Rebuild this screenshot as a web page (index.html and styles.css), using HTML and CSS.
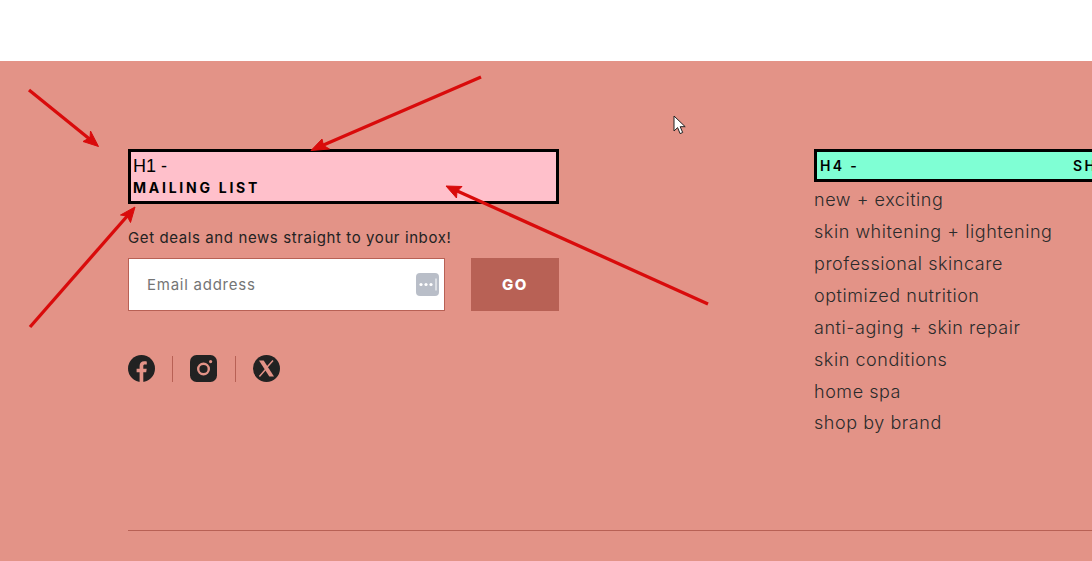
FILE: index.html
```html
<!DOCTYPE html>
<html lang="en">
<head>
<meta charset="utf-8">
<title>Footer</title>
<link rel="stylesheet" href="styles.css">
</head>
<body>
<header class="top"></header>
<footer class="footer">
  <div class="columns">
    <section class="signup">
      <h1 class="mail-title"><span class="tag">H1 -</span><span class="mail-text">MAILING LIST</span></h1>
      <p class="lead">Get deals and news straight to your inbox!</p>
      <form class="form">
        <div class="field">
          <span class="placeholder">Email address</span>
          <svg class="keyicon" width="23" height="23" viewBox="0 0 23 23"><rect width="23" height="23" rx="4" fill="#b9bec8"/><circle cx="5" cy="11.5" r="1.6" fill="#fff"/><circle cx="10" cy="11.5" r="1.6" fill="#fff"/><circle cx="15" cy="11.5" r="1.6" fill="#fff"/><rect x="19.5" y="5.5" width="1" height="12" fill="#fff"/></svg>
        </div>
        <div class="go">GO</div>
      </form>
      <div class="social">
        <svg class="icon" width="27" height="27" viewBox="0 0 27 27"><circle cx="13.500" cy="13.500" r="13.500" fill="#222"/><path d="M11.600 27V17.300H8.600v-3.500h3V11c0-3.100 1.800-4.800 4.600-4.800 1.300 0 2.300.1 2.600.2v3h-1.800c-1.400 0-1.700.7-1.700 1.700v2.700h3.400l-.5 3.500h-2.900V27z" fill="#e39387"/></svg>
        <span class="sep"></span>
        <svg class="icon icon-wide" width="27" height="27" viewBox="0 0 27 27"><rect width="27" height="27" rx="6.500" fill="#222"/><circle cx="13.500" cy="14" r="5.300" fill="none" stroke="#e39387" stroke-width="2.400"/><circle cx="20.600" cy="6.600" r="1.600" fill="#e39387"/></svg>
        <span class="sep"></span>
        <svg class="icon" width="27" height="27" viewBox="0 0 27 27"><circle cx="13.500" cy="13.500" r="13.500" fill="#222"/><path d="M6 5.500h4.700l10.300 16h-4.700z" fill="#e39387"/><path d="M20 5.500l-5.800 6.600M12.700 14.200L6.400 21.500" fill="none" stroke="#e39387" stroke-width="1.500"/></svg>
      </div>
    </section>
    <nav class="shop">
      <h4 class="shop-title"><span>H4 -</span><span class="shop-name">SHOP</span></h4>
      <ul class="links">
        <li>new + exciting</li>
        <li>skin whitening + lightening</li>
        <li>professional skincare</li>
        <li>optimized nutrition</li>
        <li>anti-aging + skin repair</li>
        <li>skin conditions</li>
        <li>home spa</li>
        <li>shop by brand</li>
      </ul>
    </nav>
  </div>
  <hr class="rule">
</footer>
<svg class="arrows" width="1092" height="561" viewBox="0 0 1092 561">
  <g fill="#d90b0b" stroke="#d90b0b" stroke-width="3.300">
    <path d="M29 90L92 141" fill="none"/><path d="M98.500 146.500L83 141.500 90 137.500 90.500 131z" stroke-width="1"/>
    <path d="M481 77L320 146.500" fill="none"/><path d="M311 150.500L322 139 323.500 145.500 329.500 149z" stroke-width="1"/>
    <path d="M30 327L129 214" fill="none"/><path d="M135 207L130.500 222.500 127 216 120.500 215z" stroke-width="1"/>
    <path d="M708 304L455 190" fill="none"/><path d="M446 186L462 186.500 457 191.500 456.500 198z" stroke-width="1"/>
  </g>
</svg>
<svg class="cursor" width="14" height="21" viewBox="0 0 14 21"><path d="M1 1v15l3.600-3.400 2.500 6 2.600-1.100-2.500-5.800h5z" fill="#fff" stroke="#222" stroke-width="1"/></svg>
</body>
</html>
```

FILE: styles.css
```css
* { box-sizing: border-box; }
html, body { margin: 0; height: 561px; overflow: hidden; }
body { background: #fff; font-family: "Inter", "Liberation Sans", sans-serif; color: #222; position: relative; width: 1092px; }
.top { height: 61px; background: #fff; }
.footer { height: 500px; background: #e39387; padding: 88px 0 0 128px; overflow: hidden; }
.columns { display: flex; gap: 255px; height: 381px; }
.signup { width: 431px; flex: none; }
.mail-title { margin: 0; height: 55px; background: #ffc0cb; border: 3px solid #000; padding: 4px 2px 0; color: #000; display: flex; flex-direction: column; font-weight: 400; }
.tag { font: 400 18px/20px "Liberation Sans", sans-serif; height: 20px; }
.mail-text { font: 700 14px/24px "Inter", sans-serif; letter-spacing: 2.75px; }
.lead { margin: 25px 0 0; font-size: 15px; line-height: 18px; color: #222; letter-spacing: 0.6px; }
.form { display: flex; justify-content: space-between; margin-top: 11px; height: 53px; }
.field { width: 317px; background: #fff; border: 1px solid #b86155; display: flex; align-items: center; justify-content: space-between; padding: 0 5px 0 18px; }
.placeholder { font-size: 15px; color: #757575; letter-spacing: 0.75px; }
.go { width: 88px; background: #b86155; color: #fff; font-weight: 800; font-size: 15px; letter-spacing: 1.6px; display: flex; align-items: center; justify-content: center; }
.social { display: flex; align-items: center; margin-top: 44px; }
.sep { width: 1px; height: 26px; background: #b86155; margin: 0 17px; }
.icon-wide { margin-right: 1px; }
.shop { width: 400px; flex: none; }
.shop-title { margin: 0; height: 33px; background: #7fffd4; border: 3px solid #000; padding: 0 3px; display: flex; align-items: center; gap: 214px; font-size: 14px; font-weight: 600; letter-spacing: 2.3px; color: #000; }
.links { list-style: none; margin: 2px 0 0; padding: 0; }
.links li { height: 32px; line-height: 32px; font-size: 18px; color: #2b2b2b; white-space: nowrap; font-weight: 300; letter-spacing: 0.55px; }
.links li:last-child { height: 30px; line-height: 30px; }
.rule { margin: 0; border: 0; height: 1px; background: #b86155; }
.arrows { position: absolute; left: 0; top: 0; pointer-events: none; }
.cursor { position: absolute; left: 673px; top: 115px; }
```
